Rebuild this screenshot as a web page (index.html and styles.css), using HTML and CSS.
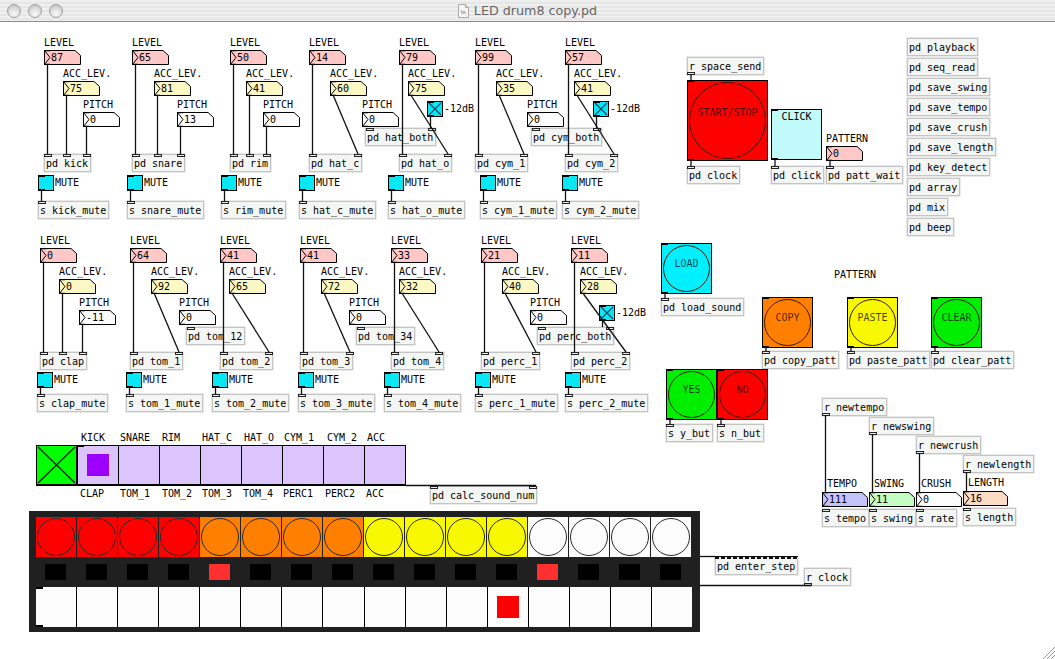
FILE: index.html
```html
<!DOCTYPE html>
<html lang="en">
<head>
    <meta charset="UTF-8">
    <meta name="viewport" content="width=device-width, initial-scale=1.0">
    <title>LED drum8 copy.pd</title>
    <link rel="stylesheet" href="styles.css">
</head>
<body>
    <div class="titlebar">
        <div class="lights">
            <span class="light"></span>
            <span class="light"></span>
            <span class="light"></span>
        </div>
        <div class="title">
            <svg class="doc-icon" width="11" height="14" viewBox="0 0 11 14">
                <path d="M0.5 0.5H7.5L10.5 3.5V13.5H0.5Z" fill="#f4f4f4" stroke="#aaa"/>
                <path d="M7.5 0.5V3.5H10.5" fill="#ddd" stroke="#aaa"/>
                <path d="M3 6L4.5 10L6 7L7.5 10" fill="none" stroke="#999"/>
            </svg>
            <span>LED drum8 copy.pd</span>
        </div>
    </div>
    <div id="canvas" class="canvas"></div>
    <script src="patch.js"></script>
</body>
</html>
```

FILE: styles.css
```css
html, body {
    margin: 0;
    height: 100%;
    overflow: hidden;
    background-color: #fff;
}

.titlebar {
    height: 22px;
    box-sizing: border-box;
    border-bottom: 1px solid #8a8a8a;
    background: repeating-linear-gradient(#efefef 0, #efefef 2px, #e6e6e6 2px, #e6e6e6 4px);
    display: grid;
    grid-template-columns: 1fr auto 1fr;
    align-items: center;
}

.lights {
    display: flex;
    gap: 7px;
    padding-left: 7px;
}

.light {
    width: 14px;
    height: 14px;
    box-sizing: border-box;
    border-radius: 50%;
    border: 1px solid #a0a0a0;
    background: radial-gradient(circle at 50% 75%, #fafafa, #d8d8d8 60%, #b4b4b4);
}

.title {
    display: flex;
    align-items: center;
    gap: 5px;
    font-family: "DejaVu Sans", sans-serif;
    font-size: 12.7px;
    color: #666;
}

/* patch canvas */
.canvas {
    position: relative;
    height: 637px;
    font-family: "DejaVu Sans Mono", monospace;
    font-size: 10px;
    line-height: 12px;
    color: #000;
}

.canvas > * {
    position: absolute;
}

.label {
    white-space: nowrap;
}

.obj {
    box-sizing: border-box;
    height: 18px;
    padding: 3px 2px 0 1px;
    border: 1px solid #c4c4c4;
    box-shadow: 0 0 0 0.5px #d4d4d4;
    background-color: #f4f6f4;
    white-space: nowrap;
}

.port {
    position: absolute;
    box-sizing: border-box;
    width: 8px;
    height: 3px;
    border: 1px solid #222;
    background-color: #e8eee8;
}

.port-in {
    top: -1px;
}

.port-out {
    bottom: -1px;
}

/* the many inlets of pd enter_step run together */
.port-bar {
    width: 83px;
    height: 3px;
    background: repeating-linear-gradient(90deg, #111 0, #111 4px, #eee 4px, #eee 6px);
    border-top: 1px solid #111;
    box-sizing: border-box;
}

.num {
    height: 15px;
}

.num svg {
    position: absolute;
    left: 0;
    top: 0;
}

.num span {
    position: absolute;
    left: 7px;
    top: 2px;
}

/* toggles and bangs have the thick black port ticks */
.tgl, .bng, .click {
    box-sizing: border-box;
    border: 1px solid #000;
}

.tgl::before, .bng::before, .click::before,
.tgl::after, .bng::after, .click::after {
    content: "";
    position: absolute;
    left: -1px;
    width: 7px;
    height: 2px;
    background-color: #000;
}

.tgl::before, .bng::before, .click::before {
    top: -1px;
}

.tgl::after, .bng::after, .click::after {
    bottom: -1px;
}

.tgl {
    width: 16px;
    height: 16px;
    background-color: #08e8f4;
}

.tgl svg {
    display: block;
}

.bng {
    width: 51px;
    height: 51px;
    padding: 1px;
    display: flex;
}

.bng-big {
    width: 81px;
    height: 81px;
}

.circle {
    flex: 1;
    box-sizing: border-box;
    border: 1px solid #3a1a00;
    border-radius: 50%;
    display: flex;
    align-items: center;
    justify-content: center;
    padding-bottom: 9px;
    color: rgba(0, 0, 0, 0.72);
}

.bng-big .circle {
    padding-bottom: 16px;
}

.click {
    width: 51px;
    height: 51px;
    background-color: #c0fafa;
    text-align: center;
    padding-top: 1px;
}

.red { background-color: #ff0000; }
.cyan { background-color: #00f0ff; }
.orange { background-color: #ff8000; }
.yellow { background-color: #f8f800; }
.green { background-color: #00ee00; }
.white { background-color: #fcfcfc; }

/* sound selector */
.hradio {
    display: flex;
    box-sizing: border-box;
    width: 329px;
    height: 41px;
    border: 1px solid #000;
    border-bottom-width: 2px;
    background-color: #dcc4fc;
}

.hradio::before {
    content: "";
    position: absolute;
    left: -1px;
    top: -1px;
    width: 7px;
    height: 2px;
    background-color: #000;
}

.hradio-cell {
    flex: 1;
    border-right: 1px solid #000;
    display: flex;
    align-items: center;
    justify-content: center;
}

.hradio-cell:last-child {
    border-right: none;
}

.hradio-mark {
    width: 22px;
    height: 22px;
    background-color: #9c00ff;
}

.xtgl {
    box-sizing: border-box;
    width: 41px;
    height: 41px;
    border: 1px solid #000;
    border-bottom-width: 2px;
    background-color: #00ff00;
}

.xtgl svg {
    display: block;
}

/* step sequencer panel */
.seq {
    box-sizing: border-box;
    width: 671px;
    height: 121px;
    padding: 6px 0 0 7px;
    background-color: #202020;
}

.seq-row {
    display: flex;
    gap: 1px;
}

.seq-bang {
    box-sizing: border-box;
    width: 40px;
    height: 40px;
    padding: 1px;
    display: flex;
}

.seq-bang .circle {
    padding: 0;
    border-color: #2a2a2a;
}

.seq-leds {
    height: 30px;
    gap: 0;
}

.led {
    width: 21px;
    height: 16px;
    margin: 7px 11px 0 9px;
    background-color: #000;
}

.led-on {
    background-color: #ff3030;
}

.seq-steps {
    position: relative;
    width: 656px;
    height: 40px;
    gap: 0;
    background-color: #fcfcfc;
}

.seq-steps::before, .seq-steps::after {
    content: "";
    position: absolute;
    left: 0;
    width: 7px;
    height: 2px;
    background-color: #000;
}

.seq-steps::before {
    top: 0;
}

.seq-steps::after {
    bottom: 0;
}

.step {
    flex: 1;
    border-right: 1px solid #000;
    display: flex;
    align-items: center;
    justify-content: center;
}

.step:last-child {
    border-right: none;
}

.step-mark {
    width: 22px;
    height: 22px;
    background-color: #ff0000;
}

.wires, .grip {
    pointer-events: none;
}
```

FILE: patch.js
```js
const canvas = document.getElementById("canvas");
const TOP = 22; // coordinates below are window coordinates
const wires = [];

function place(cls, x, y, text) {
    const el = document.createElement("div");
    el.className = cls;
    el.style.left = x + "px";
    el.style.top = (y - TOP) + "px";
    if (text !== undefined) el.textContent = text;
    canvas.appendChild(el);
    return el;
}

function label(x, y, text) {
    return place("label", x, y, text);
}

function port(parent, side, offset) {
    const p = document.createElement("div");
    p.className = "port port-" + side;
    p.style.left = (offset - 1) + "px";
    parent.appendChild(p);
}

// ins: x positions of inlets, out: x of outlet (window coordinates)
function obj(x, y, text, ins, out) {
    const el = place("obj", x, y, text);
    (ins || []).forEach(i => port(el, "in", i - x));
    if (out !== undefined) port(el, "out", out - x);
    return el;
}

function num(x, y, val, fill, w) {
    w = w || 37;
    const el = place("num", x, y);
    el.style.width = w + "px";
    el.innerHTML =
        `<svg width="${w}" height="15">` +
        `<path d="M.5 .5H${w - 6}L${w - .5} 5.5V14.5H.5Z" fill="${fill}" stroke="#000"/>` +
        `<path d="M.5 .5L6 7.5L.5 14.5" fill="none" stroke="#000"/>` +
        `<path d="M0 .5H6M0 14.5H6" stroke="#000" stroke-width="1.5"/>` +
        `</svg><span>${val}</span>`;
    return el;
}

function toggle(x, y, crossed) {
    const el = place("tgl", x, y);
    if (crossed) {
        el.innerHTML = '<svg width="14" height="14"><path d="M1 1L13 13M13 1L1 13" stroke="#146" stroke-width="1.2"/></svg>';
    }
    return el;
}

function bang(x, y, colour, text, big) {
    const el = place("bng " + colour + (big ? " bng-big" : ""), x, y);
    const c = document.createElement("div");
    c.className = "circle";
    if (text) c.textContent = text;
    el.appendChild(c);
    return el;
}

function wire(x1, y1, x2, y2) {
    wires.push([x1, y1, x2, y2]);
}

const PINK = "#ffc7c6";
const CREAM = "#fcf8c4";
const PALE = "#fcfcfc";

// one drum strip: level, accent and (sometimes) pitch, a pd box, a mute toggle
function strip(r, s) {
    label(s.lv, r.lvLabel, "LEVEL");
    num(s.lv, r.lvNum, s.lvVal, PINK);
    label(s.ac, r.acLabel, "ACC_LEV.");
    num(s.ac, r.acNum, s.acVal, CREAM);
    wire(s.lv + 3.5, r.lvNum + 15, s.lv + 3.5, r.pd);

    const ins = [s.lv];
    if (s.right) {
        // accent wire runs across to the right inlet
        ins.push(s.right);
        wire(s.ac + 3.5, r.acNum + 15, s.right + 4, r.pd);
    } else {
        ins.push(s.ac);
        wire(s.ac + 3.5, r.acNum + 15, s.ac + 3.5, r.pd);
    }
    if (s.pi !== undefined) {
        label(s.pi, r.piLabel, "PITCH");
        num(s.pi, r.piNum, s.piVal, PALE);
        if (!s.right) {
            ins.push(s.pi);
            wire(s.pi + 3.5, r.piNum + 15, s.pi + 3.5, r.pd);
        }
    }
    if (s.tgl !== undefined) {
        toggle(s.tgl, r.tgl, true);
        label(s.tgl + 17, r.tgl + 2, "-12dB");
        wire(s.tgl + 3.5, r.tgl + 16, s.tgl + 3.5, r.both);
    }
    if (s.both) {
        obj(s.both[0], r.both, "pd " + s.both[1], s.both.slice(2));
    }
    obj(s.lv, r.pd, "pd " + s.name, ins);
    toggle(s.mute, r.mute);
    label(s.mute + 17, r.mute + 2, "MUTE");
    wire(s.mute + 3.5, r.mute + 16, s.mute + 3.5, r.send);
    obj(s.mute, r.send, "s " + s.name + "_mute", [s.mute]);
}

const row1 = { lvLabel: 37, lvNum: 50, acLabel: 68, acNum: 81, piLabel: 99, piNum: 112, tgl: 101, both: 128, pd: 154, mute: 175, send: 201 };
const row2 = { lvLabel: 235, lvNum: 248, acLabel: 266, acNum: 279, piLabel: 297, piNum: 310, tgl: 305, both: 327, pd: 352, mute: 372, send: 394 };

[
    { name: "kick", lv: 44, lvVal: 87, ac: 63, acVal: 75, pi: 83, piVal: 0, mute: 38 },
    { name: "snare", lv: 132, lvVal: 65, ac: 154, acVal: 81, pi: 177, piVal: 13, mute: 127 },
    { name: "rim", lv: 230, lvVal: 50, ac: 246, acVal: 41, pi: 263, piVal: 0, mute: 221 },
    { name: "hat_c", lv: 309, lvVal: 14, ac: 330, acVal: 60, pi: 362, piVal: 0, mute: 299, right: 354, both: [365, "hat_both", 366, 428] },
    { name: "hat_o", lv: 399, lvVal: 79, ac: 408, acVal: 75, tgl: 427, mute: 388, right: 444 },
    { name: "cym_1", lv: 475, lvVal: 99, ac: 496, acVal: 35, pi: 527, piVal: 0, mute: 480, right: 520, both: [531, "cym_both", 532, 593] },
    { name: "cym_2", lv: 565, lvVal: 57, ac: 574, acVal: 41, tgl: 593, mute: 562, right: 610 }
].forEach(s => strip(row1, s));

[
    { name: "clap", lv: 40, lvVal: 0, ac: 59, acVal: 0, pi: 79, piVal: "-11", mute: 37 },
    { name: "tom_1", lv: 130, lvVal: 64, ac: 151, acVal: 92, pi: 179, piVal: 0, mute: 126, right: 175, both: [186, "tom_12", 187] },
    { name: "tom_2", lv: 220, lvVal: 41, ac: 229, acVal: 65, mute: 212, right: 265 },
    { name: "tom_3", lv: 300, lvVal: 41, ac: 321, acVal: 72, pi: 349, piVal: 0, mute: 298, right: 346, both: [356, "tom_34", 357] },
    { name: "tom_4", lv: 391, lvVal: 33, ac: 399, acVal: 32, mute: 384, right: 435 },
    { name: "perc_1", lv: 481, lvVal: 21, ac: 502, acVal: 40, pi: 530, piVal: 0, mute: 475, right: 532, both: [537, "perc_both", 538, 606] },
    { name: "perc_2", lv: 571, lvVal: 11, ac: 580, acVal: 28, tgl: 599, mute: 565, right: 622 }
].forEach(s => strip(row2, s));

// transport
obj(687, 57, "r space_send", [], 687);
wire(691, 74, 691, 80);
bang(687, 80, "red", "START/STOP", true);
obj(687, 166, "pd clock", [687]);
place("click", 771, 109, "CLICK");
obj(771, 166, "pd click", [771]);
label(826, 133, "PATTERN");
num(826, 146, 0, PINK);
obj(826, 166, "pd patt_wait", [826]);
wire(691, 161, 691, 166);
wire(775, 160, 775, 166);
wire(830, 161, 830, 166);

// subpatches on the right
["playback", "seq_read", "save_swing", "save_tempo", "save_crush", "save_length", "key_detect", "array", "mix", "beep"]
    .forEach((name, i) => obj(907, 38 + i * 20, "pd " + name));

// pattern buttons
bang(661, 243, "cyan", "LOAD");
obj(661, 298, "pd load_sound", [661]);
wire(665, 294, 665, 298);
label(834, 269, "PATTERN");
bang(762, 297, "orange", "COPY");
obj(762, 351, "pd copy_patt", [762]);
bang(847, 297, "yellow", "PASTE");
obj(847, 351, "pd paste_patt", [847]);
bang(931, 297, "green", "CLEAR");
obj(931, 351, "pd clear_patt", [931]);
bang(666, 369, "green", "YES");
bang(717, 369, "red", "NO");
obj(666, 424, "s y_but", [666]);
obj(717, 424, "s n_but", [717]);
[[766, 348, 351], [851, 348, 351], [935, 348, 351], [670, 420, 424], [721, 420, 424]]
    .forEach(w => wire(w[0], w[1], w[0], w[2]));

// tempo, swing, crush, length
[
    { x: 822, recv: "newtempo", ry: 398, name: "TEMPO", val: 111, fill: "#c4c4fc", send: "s tempo", y: 492, w: 46 },
    { x: 869, recv: "newswing", ry: 417, name: "SWING", val: 11, fill: "#c4fcc4", send: "s swing", y: 492, w: 46 },
    { x: 916, recv: "newcrush", ry: 436, name: "CRUSH", val: 0, fill: PALE, send: "s rate", y: 492, w: 46 },
    { x: 963, recv: "newlength", ry: 455, name: "LENGTH", val: 16, fill: "#fcdcc4", send: "s length", y: 491, w: 45 }
].forEach(c => {
    obj(c.x, c.ry, "r " + c.recv, [], c.x);
    wire(c.x + 3.5, c.ry + 17, c.x + 3.5, c.y);
    label(c.x + 5, c.y - 14, c.name);
    num(c.x, c.y, c.val, c.fill, c.w);
    obj(c.x, c.y + 17, c.send, [c.x]);
});

// sound selector
const xtgl = place("xtgl", 36, 445);
xtgl.innerHTML = '<svg width="39" height="38"><path d="M1 1L38 37M38 1L1 37" stroke="#0a2a0a" stroke-width="1.5"/></svg>';

const hradio = place("hradio", 77, 445);
for (let i = 0; i < 8; i++) {
    const cell = document.createElement("div");
    cell.className = "hradio-cell";
    if (i === 0) {
        const m = document.createElement("div");
        m.className = "hradio-mark";
        cell.appendChild(m);
    }
    hradio.appendChild(cell);
}
["KICK", "SNARE", "RIM", "HAT_C", "HAT_O", "CYM_1", "CYM_2", "ACC"]
    .forEach((t, i) => label([81, 120, 162, 202, 244, 284, 327, 367][i], 432, t));
["CLAP", "TOM_1", "TOM_2", "TOM_3", "TOM_4", "PERC1", "PERC2", "ACC"]
    .forEach((t, i) => label([80, 120, 162, 202, 243, 283, 325, 366][i], 488, t));
obj(430, 486, "pd calc_sound_num", [430, 529]);
wire(406, 485.5, 536, 485.5);

// step sequencer
const seq = place("seq", 29, 511);
const bangRow = document.createElement("div");
bangRow.className = "seq-row";
const ledRow = document.createElement("div");
ledRow.className = "seq-row seq-leds";
const stepRow = document.createElement("div");
stepRow.className = "seq-row seq-steps";
const colours = ["red", "orange", "yellow", "white"];
for (let i = 0; i < 16; i++) {
    const b = document.createElement("div");
    b.className = "seq-bang " + colours[Math.floor(i / 4)];
    const c = document.createElement("div");
    c.className = "circle";
    b.appendChild(c);
    bangRow.appendChild(b);

    const led = document.createElement("div");
    led.className = (i === 4 || i === 12) ? "led led-on" : "led";
    ledRow.appendChild(led);

    const step = document.createElement("div");
    step.className = "step";
    if (i === 11) {
        const m = document.createElement("div");
        m.className = "step-mark";
        step.appendChild(m);
    }
    stepRow.appendChild(step);
}
seq.append(bangRow, ledRow, stepRow);

obj(715, 557, "pd enter_step");
place("port-bar", 715, 556);
obj(804, 568, "r clock", [], 804);
wire(700, 556.5, 715, 556.5);
wire(700, 585.5, 811, 585.5);

// wires sit on top of the boxes
const svg = wires.map(w => `<line x1="${w[0]}" y1="${w[1]}" x2="${w[2]}" y2="${w[3]}"/>`).join("");
const layer = document.createElementNS("http://www.w3.org/2000/svg", "svg");
layer.setAttribute("class", "wires");
layer.setAttribute("width", "1055");
layer.setAttribute("height", "637");
layer.setAttribute("viewBox", "0 22 1055 637");
layer.setAttribute("stroke", "#111");
layer.setAttribute("stroke-width", "1.3");
layer.style.left = "0";
layer.style.top = "0";
layer.innerHTML = svg;
canvas.appendChild(layer);

// resize grip
const grip = document.createElementNS("http://www.w3.org/2000/svg", "svg");
grip.setAttribute("class", "grip");
grip.setAttribute("width", "13");
grip.setAttribute("height", "13");
grip.setAttribute("stroke", "#999");
grip.style.right = "0";
grip.style.bottom = "0";
grip.innerHTML = '<path d="M1 13L13 1M5 13L13 5M9 13L13 9"/>';
canvas.appendChild(grip);
```
